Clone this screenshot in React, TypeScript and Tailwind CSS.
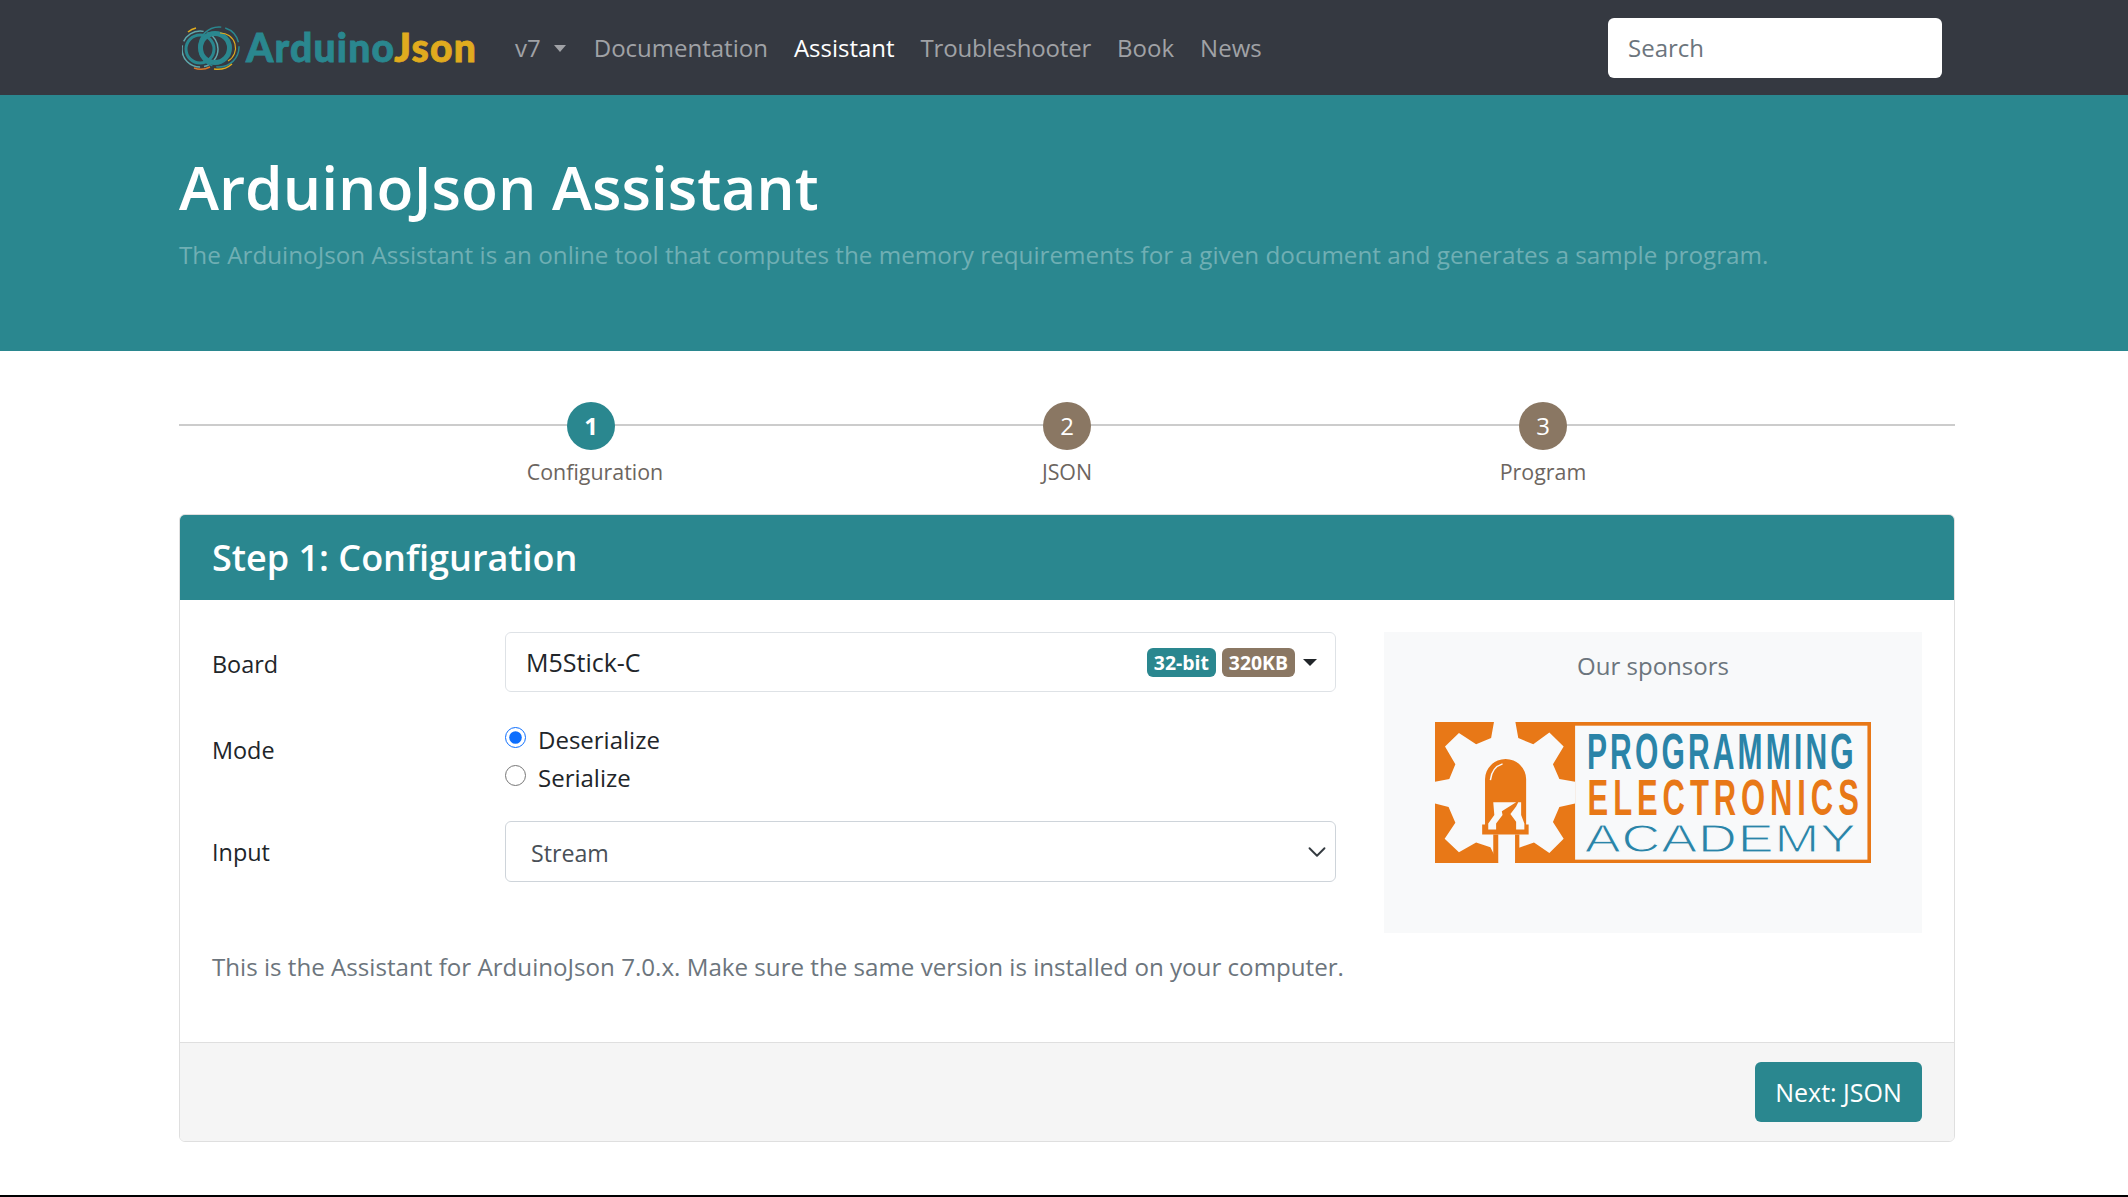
const font = "font-['Open_Sans','Noto_Sans',sans-serif]";

function RingsLogo() {
  return (
    <svg width="59" height="46" viewBox="0 0 59 46" fill="none" className="shrink-0">
      <circle cx="18" cy="24" r="18" stroke="#5fa8ad" strokeWidth="1.5" strokeDasharray="24 4 32 4" />
      <circle cx="18" cy="24" r="14" stroke="#2a878f" strokeWidth="3" />
      <circle cx="37" cy="22" r="20" stroke="#2a878f" strokeWidth="1.5" strokeDasharray="34 4 20 4" />
      <circle cx="33" cy="23" r="14.5" stroke="#2a878f" strokeWidth="5" />
      <path d="M6 7A20 20 0 0 1 14 3" stroke="#e0ab1e" strokeWidth="1.5" />
      <path d="M12 43A20 20 0 0 0 28 42" stroke="#d9772a" strokeWidth="1.5" />
      <path d="M32 44A22 22 0 0 0 50 39" stroke="#e0ab1e" strokeWidth="1.5" />
      <path d="M38 8A15 15 0 0 1 46 36" stroke="#e0ab1e" strokeWidth="1.2" />
    </svg>
  );
}

function SponsorLogo() {
  return (
    <svg width="436" height="141" viewBox="155 277 1220 420" preserveAspectRatio="none">
      <rect x="155" y="277" width="1220" height="420" fill="#e87817" />
      <rect x="547" y="288" width="818" height="399" fill="#f8f9fa" />
      <polygon
        fill="#f8f9fa"
        points="320,277 380,277 388,325 430,343 475,308 515,350 485,403 503,447 547,455 547,520 503,530 485,575 515,625 475,667 432,636 388,652 379,697 332,697 310,650 270,636 222,665 182,625 212,577 193,530 155,520 155,455 195,447 212,403 183,350 222,310 270,343 312,325"
      />
      {/* led */}
      <path d="M295 582V447A57 59 0 0 1 410 447V582H417V612H287V582Z" fill="#e87817" />
      <rect x="318" y="612" width="14" height="85" fill="#e87817" />
      <rect x="379" y="612" width="12" height="85" fill="#e87817" />
      <polygon points="318,516 382,516 342,543 344,554 326,579 326,597 304,597 304,579 321,554" fill="#f8f9fa" />
      <polygon points="396,516 396,554 405,579 405,597 382,597 382,574 366,551 382,529 388,516" fill="#f8f9fa" />
      <path d="M310 450Q314 412 344 402" stroke="#f8f9fa" strokeWidth="4" fill="none" />
      <text transform="translate(580 417) scale(0.556 1)" letterSpacing="16" fontFamily="Liberation Sans" fontWeight="700" fontSize="151" fill="#2a84a8">PROGRAMMING</text>
      <text transform="translate(582 553) scale(0.574 1)" letterSpacing="24" fontFamily="Liberation Sans" fontWeight="700" fontSize="151" fill="#e87817">ELECTRONICS</text>
      <text transform="translate(574 664) scale(1.285 1)" letterSpacing="2" fontFamily="Liberation Sans" fontSize="117" fill="#2a84a8" stroke="#f8f9fa" strokeWidth="3">ACADEMY</text>
    </svg>
  );
}

function Step({ n, label, active }: { n: number; label: string; active?: boolean }) {
  return (
    <div className="flex flex-col items-center">
      <div
        className={`w-12 h-12 rounded-full flex items-center justify-center text-white text-[24px] ${
          active ? "bg-[#2a878f] font-bold" : "bg-[#8a7763]"
        }`}
      >
        {n}
      </div>
      <div className={`mt-[6px] text-[21.4px] leading-[32px] text-[#6c6560] ${active ? "pl-2" : ""}`}>{label}</div>
    </div>
  );
}

export default function App() {
  return (
    <div className={`${font} h-[1197px] overflow-hidden bg-white text-[24px] text-[#212529] border-b-2 border-black`}>
      {/* Navbar */}
      <nav className="h-[95px] bg-[#353941] pl-[182px] pr-[186px] flex items-center">
        <RingsLogo />
        <div className="ml-[5px] text-[39px] font-black tracking-[1.2px] font-['Lato',sans-serif] leading-none [-webkit-text-stroke:0.8px]">
          <span className="text-[#2a878f]">Arduino</span>
          <span className="text-[#e0ab1e]">Json</span>
        </div>
        <div className="ml-[38px] pt-[1px] flex items-center gap-[26px] text-[#a0a2a6] text-[24px]">
          <span className="flex items-center gap-[13px] mr-[2px]">
            v7
            <span className="w-0 h-0 border-x-[6px] border-x-transparent border-t-[7px] border-t-[#a0a2a6]" />
          </span>
          <span>Documentation</span>
          <span className="text-white">Assistant</span>
          <span className="tracking-[-0.2px]">Troubleshooter</span>
          <span>Book</span>
          <span>News</span>
        </div>
        <div className="ml-auto w-[334px] h-[60px] bg-white rounded-md flex items-center px-5 pt-[1px] text-[#6c757d]">
          Search
        </div>
      </nav>

      {/* Hero */}
      <header className="h-[256px] bg-[#2a878f] pl-[179px] pt-[53px]">
        <h1 className="text-[60.5px] leading-[78px] font-semibold text-white">ArduinoJson Assistant</h1>
        <p className="mt-[11px] text-[24.25px] leading-[36px] text-[#70afb4]">
          The ArduinoJson Assistant is an online tool that computes the memory requirements for a given document and generates a sample program.
        </p>
      </header>

      <main className="mx-[179px] w-[1776px]">
        {/* Stepper */}
        <div className="relative pt-[51px] pl-[174px] h-[163px] grid grid-cols-[repeat(3,476px)]">
          <div className="absolute left-0 right-0 top-[73px] h-[2px] bg-[#cccccc]" />
          <div className="relative"><Step n={1} label="Configuration" active /></div>
          <div className="relative"><Step n={2} label="JSON" /></div>
          <div className="relative"><Step n={3} label="Program" /></div>
        </div>

        {/* Card */}
        <section className="h-[628px] border border-[#dfdfdf] rounded-md overflow-hidden flex flex-col">
          <div className="h-[85px] shrink-0 bg-[#2a878f] px-8 flex items-center text-[36px] font-semibold text-white">
            Step 1: Configuration
          </div>
          <div className="flex-1 px-8 pt-8">
            <div className="grid grid-cols-[1124px_538px] gap-x-12">
              <div>
                <div className="grid grid-cols-[293px_1fr] items-center">
                  <span className="pt-[5px] text-[23.4px]">Board</span>
                  <div className="h-[60px] border border-[#dee2e6] rounded-md flex items-center pl-5 pr-[18px] text-[25px]">
                    <span className="flex-1 pt-[2px]">M5Stick-C</span>
                    <span className="rounded-md bg-[#2a878f] px-[7px] text-[19.4px] leading-[29px] font-bold text-white">32-bit</span>
                    <span className="ml-[6px] rounded-md bg-[#8a7763] px-[7px] text-[19.4px] leading-[29px] font-bold text-white">320KB</span>
                    <span className="ml-2 w-0 h-0 border-x-[7px] border-x-transparent border-t-[7px] border-t-[#212529]" />
                  </div>
                </div>
                <div className="mt-[29px] grid grid-cols-[293px_1fr] items-center">
                  <span className="-translate-y-[8px] text-[23.4px]">Mode</span>
                  <div className="flex flex-col">
                    <label className="flex items-center h-[38px]">
                      <input type="radio" name="mode" defaultChecked className="w-[21px] h-[21px] accent-[#0d6efd] -mt-[6px]" />
                      <span className="ml-[12px]">Deserialize</span>
                    </label>
                    <label className="flex items-center h-[38px]">
                      <input type="radio" name="mode" className="w-[21px] h-[21px] -mt-[5px]" />
                      <span className="ml-[12px]">Serialize</span>
                    </label>
                  </div>
                </div>
                <div className="mt-[24px] grid grid-cols-[293px_1fr] items-center">
                  <span className="pt-[2px] text-[23.4px]">Input</span>
                  <div className="h-[61px] border border-[#ced4da] rounded-md flex items-center pl-[25px] pr-[8px] text-[23.2px] text-[#495057]">
                    <span className="flex-1 pt-[4px]">Stream</span>
                    <svg width="20" height="20" viewBox="0 0 16 16" fill="none" stroke="#343a40" strokeWidth="1.5" strokeLinecap="round" strokeLinejoin="round">
                      <path d="M2 5l6 6 6-6" />
                    </svg>
                  </div>
                </div>
              </div>
              <aside className="h-[301px] bg-[#f8f9fa] flex flex-col items-center pt-[16px]">
                <div className="text-[#6c757d] leading-[36px]">Our sponsors</div>
                <div className="mt-[38px]"><SponsorLogo /></div>
              </aside>
            </div>
            <p className="mt-[16px] leading-[36px] text-[24.15px] text-[#6c757d]">
              This is the Assistant for ArduinoJson 7.0.x. Make sure the same version is installed on your computer.
            </p>
          </div>
          <div className="h-[99px] shrink-0 bg-[#f5f5f5] border-t border-[#dfdfdf] px-8 flex items-center justify-end">
            <button className="w-[167px] h-[60px] pt-[2px] rounded-md bg-[#2a878f] text-white text-[25px]">Next: JSON</button>
          </div>
        </section>
      </main>
    </div>
  );
}
